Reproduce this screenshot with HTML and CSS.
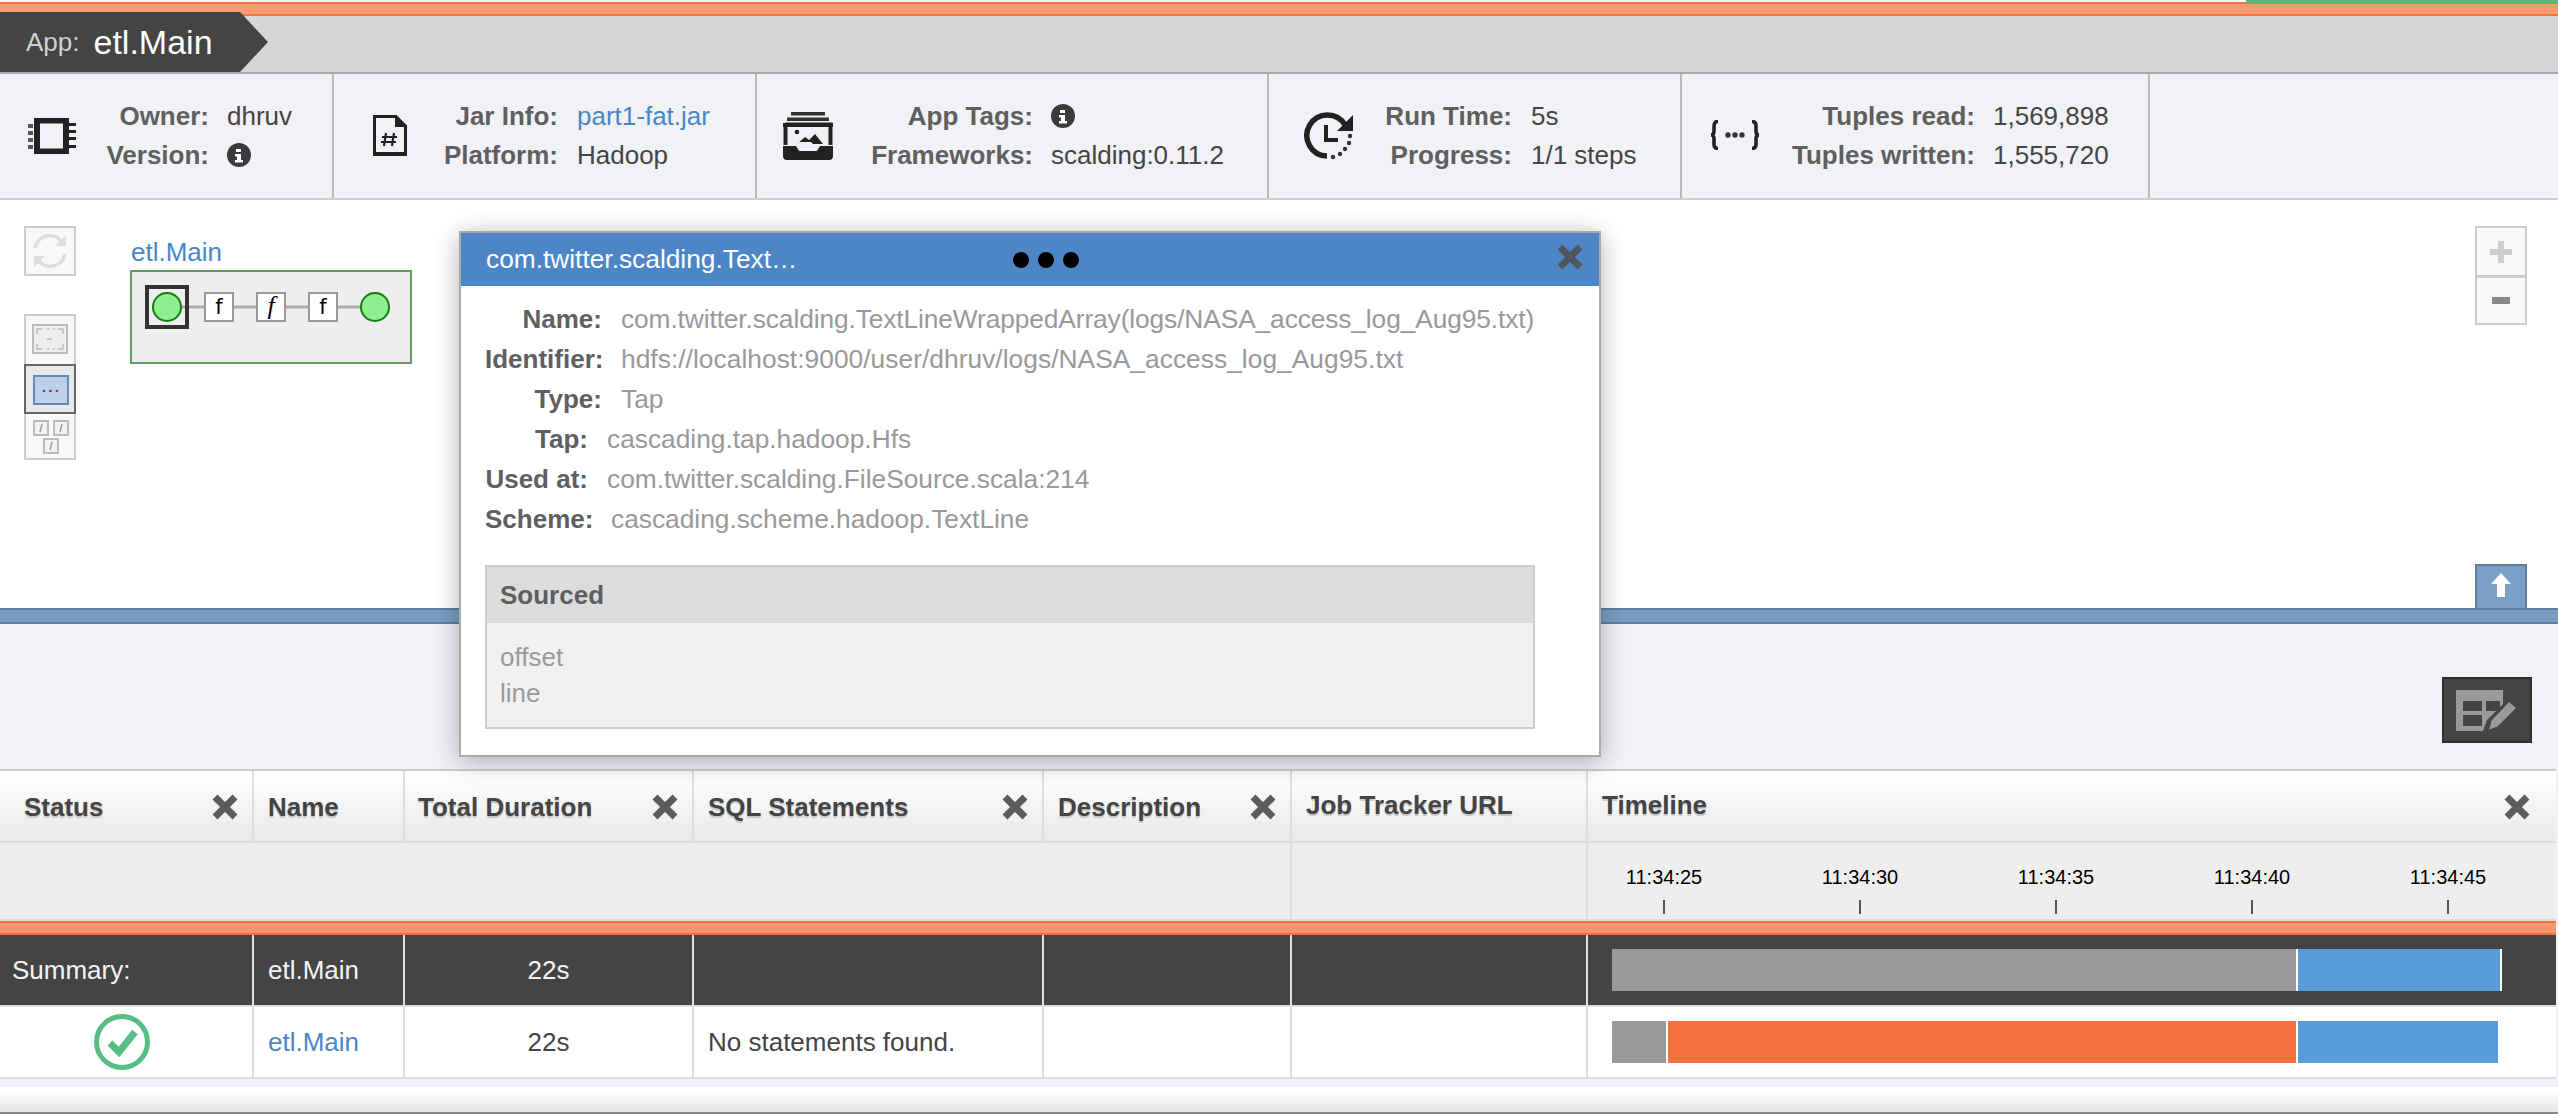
FILE: index.html
```html
<!DOCTYPE html>
<html lang="en">
<head>
<meta charset="utf-8">
<title>App: etl.Main</title>
<link rel="stylesheet" href="styles.css">
</head>
<body>
<div class="progress-stripe"><div class="progress-done"></div></div>

<header class="crumbs">
  <div class="crumb"><span class="crumb-label">App:</span><span class="crumb-name">etl.Main</span></div>
</header>

<section class="info">
  <div class="cell cell-1">
    <svg class="ico ico-chip" viewBox="0 0 48 36"><rect x="9" y="2.500" width="29" height="31" fill="none" stroke="#222" stroke-width="6"/><g fill="#555"><rect x="0" y="6" width="5" height="4"/><rect x="0" y="13" width="5" height="4"/><rect x="0" y="20" width="5" height="4"/><rect x="0" y="27" width="5" height="4"/></g><g fill="#222"><rect x="38" y="5" width="10" height="3"/><rect x="38" y="12" width="10" height="3"/><rect x="38" y="19" width="10" height="3"/><rect x="38" y="27" width="10" height="3"/></g></svg>
    <dl class="pairs">
      <dt>Owner:</dt><dd>dhruv</dd>
      <dt>Version:</dt><dd><svg class="info-dot" viewBox="0 0 24 24"><circle cx="12" cy="12" r="12" fill="#3b3b3b"/><path d="M9 6h5v3H9zM8 11h6v6h2v2.500H8V17h2v-3.500H8z" fill="#fff"/></svg></dd>
    </dl>
  </div>
  <div class="cell cell-2">
    <svg class="ico ico-doc" viewBox="0 0 34 41"><path d="M1.500 1.500H23L32.500 11V39.500H1.500z" fill="none" stroke="#222" stroke-width="3"/><path d="M22 1v11h11z" fill="#222"/><rect x="0" y="37" width="34" height="4" fill="#222"/><path d="M13 18l-2 13M21 18l-2 13M9 22h15M8 27h15" stroke="#222" stroke-width="2.200" fill="none"/></svg>
    <dl class="pairs">
      <dt>Jar Info:</dt><dd><a class="link" href="#">part1-fat.jar</a></dd>
      <dt>Platform:</dt><dd>Hadoop</dd>
    </dl>
  </div>
  <div class="cell cell-3">
    <svg class="ico ico-inbox" viewBox="0 0 50 48"><rect x="8" y="0" width="34" height="3.500" fill="#333"/><rect x="4" y="5.500" width="42" height="3.500" fill="#333"/><path d="M2.500 12.500h45V33M2.500 33V12.500" fill="none" stroke="#222" stroke-width="4"/><rect x="0" y="11" width="50" height="4" fill="#222"/><path d="M0 34h13l3 5h18l3-5h13v10q0 4-4 4H4q-4 0-4-4z" fill="#222"/><circle cx="14" cy="20" r="2.300" fill="#222"/><path d="M14 32l8-7 4 3 6-6 8 10H30l-2-2H16z" fill="#222"/></svg>
    <dl class="pairs">
      <dt>App Tags:</dt><dd><svg class="info-dot" viewBox="0 0 24 24"><circle cx="12" cy="12" r="12" fill="#3b3b3b"/><path d="M9 6h5v3H9zM8 11h6v6h2v2.500H8V17h2v-3.500H8z" fill="#fff"/></svg></dd>
      <dt>Frameworks:</dt><dd>scalding:0.11.2</dd>
    </dl>
  </div>
  <div class="cell cell-4">
    <svg class="ico ico-clock" viewBox="0 0 51 47"><path d="M42 13A20.500 20.500 0 1 0 24 44" fill="none" stroke="#222" stroke-width="5.500"/><path d="M50 3v16H34z" fill="#222"/><path d="M23 13v15h12" fill="none" stroke="#222" stroke-width="4"/><g fill="#333"><circle cx="47" cy="24" r="2.200"/><circle cx="46" cy="31" r="2.200"/><circle cx="42" cy="37" r="2.200"/><circle cx="37" cy="42" r="2.200"/><circle cx="30" cy="45" r="2.200"/></g></svg>
    <dl class="pairs">
      <dt>Run Time:</dt><dd>5s</dd>
      <dt>Progress:</dt><dd>1/1 steps</dd>
    </dl>
  </div>
  <div class="cell cell-5">
    <svg class="ico ico-braces" viewBox="0 0 50 30"><path d="M8 1.500Q4 1.500 4 6v5q0 4-3 4 3 0 3 4v5q0 4.500 4 4.500M42 1.500q4 0 4 4.500v5q0 4 3 4-3 0-3 4v5q0 4.500-4 4.500" fill="none" stroke="#222" stroke-width="3.600"/><circle cx="18" cy="15" r="2.700" fill="#333"/><circle cx="25" cy="15" r="2.700" fill="#333"/><circle cx="32" cy="15" r="2.700" fill="#333"/></svg>
    <dl class="pairs">
      <dt>Tuples read:</dt><dd>1,569,898</dd>
      <dt>Tuples written:</dt><dd>1,555,720</dd>
    </dl>
  </div>
  <div class="cell-rest"></div>
</section>

<main class="graph-pane">
  <div class="toolbar">
    <button class="tool tool-refresh" type="button">
      <svg class="tool-svg" viewBox="0 0 48 46"><path d="M9 20A15 15 0 0 1 36 14M39 26A15 15 0 0 1 12 32" fill="none" stroke="#ddd" stroke-width="3.500"/><path d="M40 7v11H29zM8 39V28h11z" fill="#ddd"/></svg>
    </button>
    <div class="tool-group">
      <button class="tool" type="button">
        <svg class="tool-svg" viewBox="0 0 48 46"><rect x="7" y="8" width="34" height="28" fill="#eee" stroke="#bbb" stroke-width="2"/><path d="M11 17v-5h5M32 12h5v5M11 27v5h5M32 32h5v-5" fill="none" stroke="#bbb" stroke-width="1.500"/><path d="M21 12h2M27 12h2M21 32h2M27 32h2M21 22h5" stroke="#bbb" stroke-width="1.500"/></svg>
      </button>
      <button class="tool tool-on" type="button">
        <svg class="tool-svg" viewBox="0 0 46 46"><rect x="7" y="9" width="34" height="28" fill="#bcd0ea" stroke="#5d8db8" stroke-width="2"/><circle cx="17" cy="24" r="1.300" fill="#3b4fa0"/><circle cx="23.500" cy="24" r="1.300" fill="#444"/><circle cx="30" cy="24" r="1.300" fill="#a03b3b"/></svg>
      </button>
      <button class="tool" type="button">
        <svg class="tool-svg" viewBox="0 0 48 44"><g fill="#f2f2f2" stroke="#bbb" stroke-width="2"><rect x="8" y="5" width="14" height="14"/><rect x="28" y="5" width="14" height="14"/><rect x="18" y="23" width="14" height="14"/></g><path d="M16 8l-2 8M36 8l-2 8M26 26l-2 8" stroke="#a99" stroke-width="1.500"/></svg>
      </button>
    </div>
  </div>

  <div class="flow">
    <a class="flow-title link" href="#">etl.Main</a>
    <svg class="flow-svg" viewBox="0 0 282 94" width="282" height="94">
      <rect x="1" y="1" width="280" height="92" fill="#eee" stroke="#5f9b63" stroke-width="2"/>
      <path d="M52 37H230" stroke="#aaa" stroke-width="3"/>
      <rect x="17" y="17" width="40" height="40" fill="none" stroke="#333" stroke-width="4"/>
      <circle cx="37" cy="37" r="14" fill="#90ee90" stroke="#0f7f0f" stroke-width="2"/>
      <rect x="75" y="23" width="28" height="28" fill="#fff" stroke="#999" stroke-width="2"/>
      <rect x="127" y="23" width="28" height="28" fill="#fff" stroke="#999" stroke-width="2"/>
      <rect x="179" y="23" width="28" height="28" fill="#fff" stroke="#999" stroke-width="2"/>
      <text class="fn" x="89" y="44">f</text>
      <text class="fn fn-i" x="141" y="44">f</text>
      <text class="fn" x="193" y="44">f</text>
      <circle cx="245" cy="37" r="14" fill="#90ee90" stroke="#0f7f0f" stroke-width="2"/>
    </svg>
  </div>

  <div class="zoom-ctl">
    <button class="zoom-btn zoom-plus" type="button"><svg viewBox="0 0 24 24" width="24" height="24"><path d="M12 1v22M1 12h22" stroke="#ccc" stroke-width="6"/></svg></button>
    <button class="zoom-btn" type="button"><svg viewBox="0 0 20 10" width="20" height="10"><rect x="1" y="1" width="18" height="7" fill="#888"/></svg></button>
  </div>

  <button class="collapse" type="button"><svg viewBox="0 0 20 24" width="20" height="24"><path d="M10 0L20 11H14V24H6V11H0z" fill="#fff"/></svg></button>
</main>

<div class="split"></div>

<section class="panel">
  <button class="edit-cols" type="button"><svg viewBox="0 0 62 42" width="62" height="42"><path d="M0 1h47v14l-10 10-6 6-4 11H0z" fill="#9a9a9a"/><g fill="#444"><rect x="7" y="12" width="19" height="10"/><rect x="7" y="26" width="19" height="11"/><rect x="30" y="12" width="14" height="10"/></g><path d="M32 42l3-11 18-19 8 7-19 19z" fill="#9a9a9a" stroke="#444" stroke-width="1.500"/></svg></button>
</section>

<section class="grid">
  <div class="row row-head">
    <div class="hd"><span>Status</span><svg class="x" viewBox="0 0 26 26"><path d="M3 3l20 20M23 3L3 23" stroke="#5c5c5c" stroke-width="7"/></svg></div>
    <div class="hd"><span>Name</span></div>
    <div class="hd"><span>Total Duration</span><svg class="x" viewBox="0 0 26 26"><path d="M3 3l20 20M23 3L3 23" stroke="#5c5c5c" stroke-width="7"/></svg></div>
    <div class="hd"><span>SQL Statements</span><svg class="x" viewBox="0 0 26 26"><path d="M3 3l20 20M23 3L3 23" stroke="#5c5c5c" stroke-width="7"/></svg></div>
    <div class="hd"><span>Description</span><svg class="x" viewBox="0 0 26 26"><path d="M3 3l20 20M23 3L3 23" stroke="#5c5c5c" stroke-width="7"/></svg></div>
    <div class="hd hd-up"><span>Job Tracker URL</span></div>
    <div class="hd hd-last hd-up"><span>Timeline</span><svg class="x x-2" viewBox="0 0 26 26"><path d="M3 3l20 20M23 3L3 23" stroke="#5c5c5c" stroke-width="7"/></svg></div>
  </div>
  <div class="row row-filter">
    <div class="flt flt-span"></div>
    <div class="flt"></div>
    <div class="flt flt-last ticks">
      <div class="tick"><span>11:34:25</span><i></i></div>
      <div class="tick"><span>11:34:30</span><i></i></div>
      <div class="tick"><span>11:34:35</span><i></i></div>
      <div class="tick"><span>11:34:40</span><i></i></div>
      <div class="tick"><span>11:34:45</span><i></i></div>
    </div>
  </div>
  <div class="orange-band"></div>
  <div class="row row-sum">
    <div class="td td-sum">Summary:</div>
    <div class="td">etl.Main</div>
    <div class="td td-c">22s</div>
    <div class="td"></div>
    <div class="td"></div>
    <div class="td"></div>
    <div class="td td-last td-bars">
      <div class="bar bar-gray bar-684"></div><div class="bar bar-blue bar-202 bar-endgap"></div>
    </div>
  </div>
  <div class="row row-item">
    <div class="td td-status"><svg viewBox="0 0 56 56" width="56" height="56"><circle cx="28" cy="28" r="25.500" fill="none" stroke="#56bd84" stroke-width="5"/><path d="M16 29l9 9 16-20" fill="none" stroke="#56bd84" stroke-width="7"/></svg></div>
    <div class="td"><a class="link" href="#">etl.Main</a></div>
    <div class="td td-c">22s</div>
    <div class="td">No statements found.</div>
    <div class="td"></div>
    <div class="td"></div>
    <div class="td td-last td-bars">
      <div class="bar bar-gray bar-54"></div><div class="bar bar-orange bar-628"></div><div class="bar bar-blue bar-200"></div>
    </div>
  </div>
</section>
<div class="foot-gap"></div>
<footer class="foot"></footer>

<aside class="popup">
  <div class="popup-head">
    <span class="popup-title">com.twitter.scalding.Text…</span>
    <span class="dots"><i></i><i></i><i></i></span>
    <svg class="popup-x" viewBox="0 0 26 26"><path d="M3 3l20 20M23 3L3 23" stroke="#50565e" stroke-width="7"/></svg>
  </div>
  <div class="popup-body">
    <dl class="kv kv-a">
      <dt>Name:</dt><dd class="dd-tight">com.twitter.scalding.TextLineWrappedArray(logs/NASA_access_log_Aug95.txt)</dd>
      <dt>Identifier:</dt><dd class="dd-wide">hdfs://localhost:9000/user/dhruv/logs/NASA_access_log_Aug95.txt</dd>
      <dt>Type:</dt><dd>Tap</dd>
    </dl>
    <dl class="kv kv-b">
      <dt>Tap:</dt><dd>cascading.tap.hadoop.Hfs</dd>
      <dt>Used at:</dt><dd>com.twitter.scalding.FileSource.scala:214</dd>
    </dl>
    <dl class="kv kv-c">
      <dt>Scheme:</dt><dd>cascading.scheme.hadoop.TextLine</dd>
    </dl>
    <div class="sourced">
      <div class="sourced-head">Sourced</div>
      <div class="sourced-body"><div>offset</div><div>line</div></div>
    </div>
  </div>
</aside>
</body>
</html>
```

FILE: styles.css
```css
* { box-sizing: border-box; }
html, body { margin: 0; padding: 0; }
body {
  position: relative;
  width: 2558px;
  height: 1114px;
  overflow: hidden;
  background: #f1f2f6;
  font-family: "Liberation Sans", Arial, sans-serif;
  font-size: 26px;
  color: #444;
}
.link { color: #4a86c8; text-decoration: none; }
button { padding: 0; font: inherit; cursor: pointer; }

.progress-stripe {
  position: relative;
  height: 12px;
  padding-top: 2px;
  background: #fff;
}
.progress-stripe::before {
  content: "";
  display: block;
  height: 10px;
  background: #f79b72;
  border-top: 2px solid #f4703c;
  border-bottom: 2px solid #f4703c;
}
.progress-done {
  position: absolute;
  top: 0;
  right: 0;
  width: 312px;
  height: 3px;
  background: #5cb97f;
}

.crumbs {
  height: 62px;
  background: #d6d6d6;
  border-bottom: 2px solid #aaa;
}
.crumb {
  display: flex;
  align-items: center;
  width: 268px;
  height: 60px;
  padding-left: 26px;
  background: #444;
  clip-path: polygon(0 0, 240px 0, 268px 50%, 240px 100%, 0 100%);
  color: #fff;
}
.crumb-label { color: #d0d0d0; font-size: 26px; margin-right: 14px; }
.crumb-name { font-size: 34px; }

.info {
  display: flex;
  height: 126px;
  background: #f1f2f6;
  border-bottom: 2px solid #ccc;
}
.cell {
  display: flex;
  align-items: center;
  flex: none;
  height: 100%;
  border-right: 2px solid #bbb;
}
.cell-1 { width: 334px; padding-left: 28px; --label: 133px; --gap: 18px; }
.cell-2 { width: 423px; padding-left: 39px; --label: 151px; --gap: 19px; }
.cell-3 { width: 512px; padding-left: 26px; --label: 200px; --gap: 18px; }
.cell-4 { width: 413px; padding-left: 34px; --label: 158px; --gap: 19px; }
.cell-5 { width: 468px; padding-left: 28px; --label: 215px; --gap: 18px; }
.cell-rest { flex: 1; }
.ico { flex: none; display: block; }
.ico-chip { width: 48px; height: 36px; margin-top: -1px; }
.ico-doc { width: 34px; height: 41px; margin-top: -1px; }
.ico-inbox { width: 50px; height: 48px; margin-top: -1px; }
.ico-clock { width: 51px; height: 47px; margin-top: -1px; }
.ico-braces { width: 50px; height: 30px; margin-top: -3px; }
.pairs {
  display: grid;
  grid-template-columns: var(--label) auto;
  column-gap: var(--gap);
  grid-auto-rows: 39px;
  margin: -1px 0 0;
  align-items: center;
}
.pairs dt { font-weight: 700; color: #5f5f5f; text-align: right; white-space: nowrap; }
.pairs dd { margin: 0; color: #444; white-space: nowrap; display: flex; align-items: center; }
.info-dot { display: block; width: 24px; height: 24px; }

.graph-pane {
  position: relative;
  display: flex;
  align-items: flex-start;
  gap: 54px;
  height: 408px;
  padding: 26px 0 0 24px;
  background: #fff;
}
.toolbar { display: flex; flex-direction: column; gap: 38px; width: 52px; }
.tool {
  display: block;
  width: 52px;
  height: 48px;
  background: #f8f8f8;
  border: 0;
}
.tool-svg { display: block; width: 48px; height: 46px; margin: 1px auto; }
.tool-refresh { height: 50px; border: 2px solid #ccc; }
.tool-refresh .tool-svg { margin: 0; }
.tool-group {
  display: flex;
  flex-direction: column;
  width: 52px;
  height: 146px;
  border: 2px solid #ccc;
  background: #f8f8f8;
  overflow: visible;
}
.tool-group .tool { margin-left: -2px; background: transparent; }
.tool-on {
  height: 50px;
  background: #e8e8e8 !important;
  border: 2px solid #666;
}
.flow { display: flex; flex-direction: column; }
.flow-title { display: block; height: 30px; line-height: 30px; margin: 11px 0 3px 1px; }
.flow-svg { display: block; }
.fn { font-family: "DejaVu Sans", sans-serif; font-size: 21px; text-anchor: middle; fill: #000; }
.fn-i { font-family: "Liberation Serif", serif; font-style: italic; font-size: 26px; }

.zoom-ctl {
  position: absolute;
  top: 26px;
  left: 2475px;
  width: 52px;
}
.zoom-btn {
  display: flex;
  align-items: center;
  justify-content: center;
  width: 52px;
  height: 49px;
  background: #f9f9f9;
  border: 2px solid #ccc;
}
.zoom-plus { height: 50px; border-bottom-width: 1px; }
.collapse {
  position: absolute;
  left: 2475px;
  bottom: 0;
  display: flex;
  align-items: center;
  justify-content: center;
  width: 52px;
  height: 44px;
  padding-bottom: 4px;
  background: #7a9fc4;
  border: 2px solid #5c7f9f;
  border-bottom: 0;
}

.split {
  height: 16px;
  background: #7a9fc4;
  border-top: 2px solid #5c7f9f;
  border-bottom: 2px solid #5c7f9f;
  box-shadow: 0 -2px 0 #ccc;
}

.panel {
  position: relative;
  display: flex;
  justify-content: flex-end;
  height: 145px;
  padding: 53px 26px 0 0;
  background: #f1f2f6;
}
.edit-cols {
  display: flex;
  align-items: center;
  justify-content: center;
  width: 90px;
  height: 66px;
  background: #444;
  border: 2px solid #2e2e2e;
}

.grid { width: 2556px; border-top: 2px solid #ccc; background: #fff; }
.row {
  display: grid;
  grid-template-columns: 254px 151px 289px 350px 248px 296px 968px;
}
.row-head { height: 72px; border-bottom: 2px solid #ddd; background: linear-gradient(#fff, #e9e9e9); }
.hd {
  display: flex;
  align-items: center;
  justify-content: space-between;
  padding: 2px 14px 0 14px;
  border-right: 2px solid #ddd;
  font-weight: 700;
  color: #444;
  text-shadow: 0 2px 1px rgba(0, 0, 0, .18);
}
.row-head .hd:first-child { padding-left: 24px; }
.row-head .hd:nth-child(3) { padding-left: 13px; }
.hd-up { padding-top: 0; padding-bottom: 2px; }
.hd-last { border-right: 0; padding-right: 26px; }
.x { display: block; width: 26px; height: 26px; flex: none; }
.x-2 { margin-top: 4px; }

.row-filter { height: 78px; border-bottom: 2px solid #ddd; background: #eee; }
.flt { border-right: 2px solid #ddd; }
.flt-span { grid-column: span 5; }
.flt-last { border-right: 0; }
.ticks { display: flex; gap: 118px; padding: 22px 0 0 37px; }
.tick { display: flex; flex-direction: column; align-items: center; width: 78px; color: #000; font-size: 20px; line-height: 24px; }
.tick i { display: block; width: 2px; height: 14px; margin-top: 11px; background: #555; }

.orange-band {
  height: 14px;
  background: #f4976f;
  border-top: 2px solid #f4703c;
  border-bottom: 2px solid #f4703c;
}
.row-sum { height: 72px; background: #444; color: #f4f4f4; border-bottom: 2px solid #ddd; }
.row-sum .td { border-right-color: #ddd; }
.row-item { height: 72px; background: #fff; border-bottom: 2px solid #ddd; }
.td {
  display: flex;
  align-items: center;
  padding-left: 14px;
  border-right: 2px solid #ddd;
  white-space: nowrap;
}
.td-sum { padding-left: 12px; }
.td-c { justify-content: center; padding-left: 0; }
.td-status { justify-content: center; padding: 0 8px 0 0; }
.td-last { border-right: 0; }
.td-bars { padding-left: 24px; align-items: center; }
.bar { height: 42px; flex: none; }
.bar-gray { background: #999; }
.bar-orange { background: #f4703c; border-left: 2px solid #fff; border-right: 2px solid #fff; }
.bar-blue { background: #579dd9; }
.row-sum .bar-blue { border-left: 2px solid #fff; }
.bar-endgap { border-right: 2px solid #fff; }
.bar-684 { width: 684px; }
.bar-202 { width: 206px; }
.bar-54 { width: 54px; }
.bar-628 { width: 632px; }
.bar-200 { width: 200px; }

.foot-gap { height: 8px; }
.foot {
  height: 27px;
  background: linear-gradient(#fff 10%, #e4e4e4);
  border-bottom: 2px solid #888;
}

.popup {
  position: absolute;
  left: 459px;
  top: 231px;
  width: 1142px;
  height: 526px;
  background: #fff;
  border: 2px solid #aaa;
  box-shadow: 0 4px 24px rgba(0, 0, 0, .3);
}
.popup-head {
  display: flex;
  align-items: center;
  height: 53px;
  padding: 0 16px 0 25px;
  background: #4d86c6;
  color: #fff;
}
.popup-title { width: 527px; white-space: nowrap; font-size: 26.3px; }
.dots { display: flex; gap: 9px; width: 66px; }
.dots i { display: block; width: 16px; height: 16px; border-radius: 50%; background: #000; }
.popup-x { display: block; width: 26px; height: 26px; margin-left: auto; margin-top: -6px; }
.popup-body { padding: 13px 0 0 24px; }
.kv {
  display: grid;
  grid-auto-rows: 40px;
  column-gap: 19px;
  align-items: center;
  margin: 0;
  white-space: nowrap;
}
.kv-a { grid-template-columns: 117px auto; }
.kv-b { grid-template-columns: 103px auto; }
.kv-c { grid-template-columns: 107px auto; }
.kv dt { font-weight: 700; color: #5f5f5f; text-align: right; }
.kv dd { margin: 0; color: #999; font-size: 26.3px; }
.kv .dd-tight { letter-spacing: -.1px; }
.kv .dd-wide { letter-spacing: .05px; }
.sourced { width: 1050px; height: 164px; margin-top: 26px; border: 2px solid #ccc; background: #f1f1f1; }
.sourced-head {
  display: flex;
  align-items: center;
  height: 56px;
  padding-left: 13px;
  background: #dcdcdc;
  font-weight: 700;
  color: #5f5f5f;
}
.sourced-body { padding: 16px 0 0 13px; color: #999; line-height: 36px; }
```
